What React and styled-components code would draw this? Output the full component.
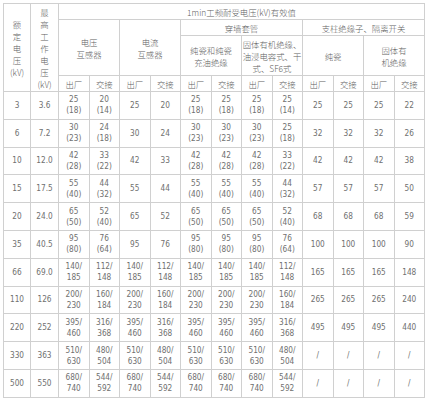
import React from "react";
import styled, { createGlobalStyle } from "styled-components";

const Global = createGlobalStyle`
  html, body { margin: 0; padding: 0; background: #ffffff; }
  body { width: 432px; height: 400px; overflow: hidden; }
`;

const Page = styled.div`
  padding: 3px 0 0 3px;
`;

const Grid = styled.div`
  display: grid;
  grid-template-columns: 27px 28px repeat(12, 30.5px);
  grid-template-rows: 16px 16px 40px 16px repeat(11, 27.8px);
  width: fit-content;
  border-top: 1px solid #d0d0d0;
  border-left: 1px solid #d0d0d0;
  background: #fff;
`;

const Cell = styled.div`
  grid-column: span ${(p) => p.$cols || 1};
  grid-row: span ${(p) => p.$rows || 1};
  border-right: 1px solid #d0d0d0;
  border-bottom: 1px solid #d0d0d0;
  display: flex;
  flex-direction: column;
  align-items: center;
  justify-content: center;
  text-align: center;
  overflow: hidden;
  white-space: nowrap;
`;

const Head = styled(Cell)`
  font-family: "Noto Sans CJK SC", "DejaVu Sans", sans-serif;
  font-weight: 300;
  font-size: 8.4px;
  line-height: 12px;
  color: #5f5f5f;
`;

const Data = styled(Cell)`
  font-family: "DejaVu Sans Condensed", "DejaVu Sans", sans-serif;
  font-stretch: condensed;
  font-size: 8.2px;
  line-height: 11px;
  color: #707070;
`;

const Line = styled.span`
  display: block;
`;

const Lines = ({ text }) =>
  text.split("|").map((t, i) => <Line key={i}>{t}</Line>);

const rows = [
  ["3", "3.6", "25|(18)", "20|(14)", "25", "20", "25|(18)", "25|(18)", "25|(18)", "25|(14)", "25", "25", "25", "22"],
  ["6", "7.2", "30|(23)", "24|(18)", "30", "24", "30|(23)", "30|(23)", "30|(23)", "25|(18)", "32", "32", "32", "26"],
  ["10", "12.0", "42|(28)", "33|(22)", "42", "33", "42|(28)", "42|(28)", "42|(28)", "33|(22)", "42", "42", "42", "38"],
  ["15", "17.5", "55|(40)", "44|(32)", "55", "44", "55|(40)", "55|(40)", "55|(40)", "44|(32)", "57", "57", "57", "50"],
  ["20", "24.0", "65|(50)", "52|(40)", "65", "52", "65|(50)", "65|(50)", "65|(50)", "52|(40)", "68", "68", "68", "59"],
  ["35", "40.5", "95|(80)", "76|(64)", "95", "76", "95|(80)", "95|(80)", "95|(80)", "76|(64)", "100", "100", "100", "90"],
  ["66", "69.0", "140/|185", "112/|148", "140/|185", "112/|148", "140/|185", "140/|185", "140/|185", "112/|148", "165", "165", "165", "148"],
  ["110", "126", "200/|230", "160/|184", "200/|230", "160/|184", "200/|230", "200/|230", "200/|230", "160/|184", "265", "265", "265", "240"],
  ["220", "252", "395/|460", "316/|368", "395/|460", "316/|368", "395/|460", "395/|460", "395/|460", "316/|368", "495", "495", "495", "440"],
  ["330", "363", "510/|630", "480/|504", "510/|630", "480/|504", "510/|630", "510/|630", "510/|630", "480/|504", "/", "/", "/", "/"],
  ["500", "550", "680/|740", "544/|592", "680/|740", "544/|592", "680/|740", "680/|740", "680/|740", "544/|592", "/", "/", "/", "/"],
];

const subHeads = Array.from({ length: 12 }, (_, i) => (i % 2 === 0 ? "出厂" : "交接"));

export default function App() {
  return (
    <>
      <Global />
      <Page>
        <Grid>
          <Head $rows={4}><Lines text="额|定|电|压|(kV)" /></Head>
          <Head $rows={4}><Lines text="最|高|工|作|电|压|(kV)" /></Head>
          <Head $cols={12}>1min工频耐受电压(kV)有效值</Head>

          <Head $cols={2} $rows={2}><Lines text="电压|互感器" /></Head>
          <Head $cols={2} $rows={2}><Lines text="电流|互感器" /></Head>
          <Head $cols={4}>穿墙套管</Head>
          <Head $cols={4}>支柱绝缘子、隔离开关</Head>

          <Head $cols={2}><Lines text="纯瓷和纯瓷|充油绝缘" /></Head>
          <Head $cols={2}><Lines text="固体有机绝缘、|油浸电容式、干|式、SF6式" /></Head>
          <Head $cols={2}>纯瓷</Head>
          <Head $cols={2}><Lines text="固体有|机绝缘" /></Head>

          {subHeads.map((h, i) => (
            <Head key={"s" + i}>{h}</Head>
          ))}

          {rows.map((r, ri) =>
            r.map((v, ci) => (
              <Data key={ri + "-" + ci}>
                <Lines text={v} />
              </Data>
            ))
          )}
        </Grid>
      </Page>
    </>
  );
}
